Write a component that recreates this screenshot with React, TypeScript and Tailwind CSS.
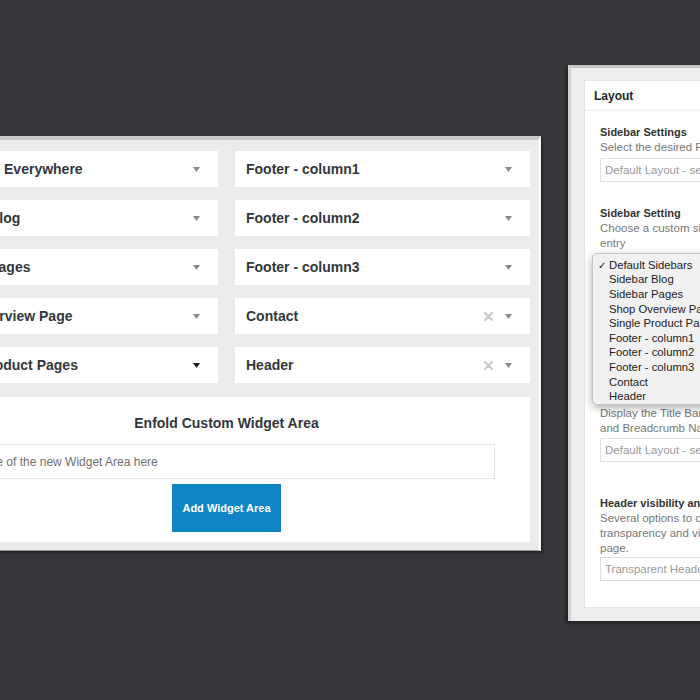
import React from 'react';

type Area = { name: string; removable?: boolean; dark?: boolean };

const leftAreas: Area[] = [
  { name: 'Displayed Everywhere' },
  { name: 'Sidebar Blog' },
  { name: 'Sidebar Pages' },
  { name: 'Shop Overview Page' },
  { name: 'Single Product Pages', dark: true },
];

const rightAreas: Area[] = [
  { name: 'Footer - column1' },
  { name: 'Footer - column2' },
  { name: 'Footer - column3' },
  { name: 'Contact', removable: true },
  { name: 'Header', removable: true },
];

const menuItems = [
  'Default Sidebars',
  'Sidebar Blog',
  'Sidebar Pages',
  'Shop Overview Page',
  'Single Product Page',
  'Footer - column1',
  'Footer - column2',
  'Footer - column3',
  'Contact',
  'Header',
];

function Caret({ dark }: { dark?: boolean }) {
  return (
    <svg width="7" height="5" viewBox="0 0 7 5" className="shrink-0">
      <path d="M0 0h7L3.5 5z" fill={dark ? '#1e1e1e' : '#8a8a8a'} />
    </svg>
  );
}

function Cross() {
  return (
    <svg width="9" height="9" viewBox="0 0 9 9" className="shrink-0">
      <path d="M1 1l7 7M8 1L1 8" stroke="#c9c9c9" strokeWidth="2.2" strokeLinecap="round" />
    </svg>
  );
}

function AreaCell({ area }: { area: Area }) {
  return (
    <div className="flex h-[38px] items-center border border-[#ececec] bg-white pl-[11px] pr-[18px]">
      <span className="flex-1 whitespace-nowrap text-[14px] font-bold text-[#32373c]">{area.name}</span>
      {area.removable && (
        <span className="mr-[12px] flex">
          <Cross />
        </span>
      )}
      <Caret dark={area.dark} />
    </div>
  );
}

function SelectBox({ text }: { text: string }) {
  return (
    <div className="flex h-[24px] items-center whitespace-nowrap border border-[#e0e0e0] bg-white pl-[4px] text-[11.5px] text-[#9a9a9a]">
      {text}
    </div>
  );
}

export default function App() {
  return (
    <div className="relative h-[700px] w-[700px] overflow-hidden bg-[#35373b] font-['Liberation_Sans',Arial,sans-serif]">
      {/* widget areas window */}
      <div className="absolute left-[-87px] top-[136px] w-[628px] border-t-[4px] border-r-[3px] border-b border-t-[#c9c9c9] border-r-[#f7f7f7] border-b-[#9c9c9c] bg-[#ebebeb] pb-[7px] pl-[9px] pr-[7px] pt-[10px] shadow-[2px_2px_2px_rgba(0,0,0,0.35)]">
        <div className="grid grid-cols-2 gap-x-[15px] gap-y-[11px]">
          {leftAreas.map((a, i) => (
            <React.Fragment key={a.name}>
              <AreaCell area={a} />
              <AreaCell area={rightAreas[i]} />
            </React.Fragment>
          ))}
        </div>

        <div className="mt-[12px] flex flex-col border border-[#ececec] bg-white pb-[10px] pt-[18px]">
          <div className="text-center text-[14px] font-bold leading-[16px] text-[#32373c]">
            Enfold Custom Widget Area
          </div>
          <div className="ml-[9px] mt-[13px] flex h-[35px] w-[563px] items-center border border-[#e4e4e4] pl-[8px] text-[12px] text-[#6f6f6f]">
            Enter name of the new Widget Area here
          </div>
          <button className="mx-auto mt-[5px] h-[48px] w-[109px] bg-[#0f85c5] text-[11px] font-bold text-white">
            Add Widget Area
          </button>
        </div>
      </div>

      {/* layout meta box window */}
      <div className="absolute left-[568px] top-[65px] w-[300px] border-l-[3px] border-t-[3px] border-l-[#d3d3d3] border-t-[#c6c6c6] bg-[#eeeeee] pb-[13px] pl-[13px] pt-[12px] shadow-[-2px_2px_3px_rgba(0,0,0,0.4)]">
        <div className="h-[528px] border border-[#e3e3e3] bg-white">
          <div className="flex h-[30px] items-center border-b border-[#eeeeee] pl-[9px] text-[12px] font-bold text-[#23282d]">
            Layout
          </div>
          <div className="pl-[15px] text-[11.5px] leading-[15px]">
            <div className="mt-[14px] text-[11px] font-bold text-[#333]">Sidebar Settings</div>
            <div className="whitespace-nowrap text-[#777]">Select the desired Page Layout</div>
            <div className="mt-[3px] h-[23px]">
              <SelectBox text="Default Layout - set in Layout > Sidebars" />
            </div>

            <div className="mt-[25px] text-[11px] font-bold text-[#333]">Sidebar Setting</div>
            <div className="whitespace-nowrap text-[#777]">Choose a custom sidebar for this</div>
            <div className="text-[#777]">entry</div>

            {/* open native select menu */}
            <div className="relative -ml-[8px] mt-[2px] h-[152px] rounded-[5px] border border-[#c4c4c4] bg-[#f1f1f1] pt-[4px] shadow-[0_3px_8px_rgba(0,0,0,0.3)]">
              {menuItems.map((m, i) => (
                <div key={m} className="flex h-[14.6px] items-center whitespace-nowrap text-[11.3px] text-[#222]">
                  <span className="w-[16px] pl-[5px] text-[10px]">{i === 0 ? '✓' : ''}</span>
                  {m}
                </div>
              ))}
            </div>

            <div className="mt-[1px] whitespace-nowrap text-[#777]">Display the Title Bar with Page Title</div>
            <div className="whitespace-nowrap text-[#777]">and Breadcrumb Navigation</div>
            <div className="mt-[2px]">
              <SelectBox text="Default Layout - set in Layout > Title Bar" />
            </div>

            <div className="mt-[34px] whitespace-nowrap text-[11px] font-bold text-[#333]">Header visibility and transparency</div>
            <div className="whitespace-nowrap text-[#777]">Several options to change the header</div>
            <div className="whitespace-nowrap text-[#777]">transparency and visibility on this</div>
            <div className="text-[#777]">page.</div>
            <div className="mt-[1px]">
              <SelectBox text="Transparent Header - default" />
            </div>
          </div>
        </div>
      </div>
    </div>
  );
}
